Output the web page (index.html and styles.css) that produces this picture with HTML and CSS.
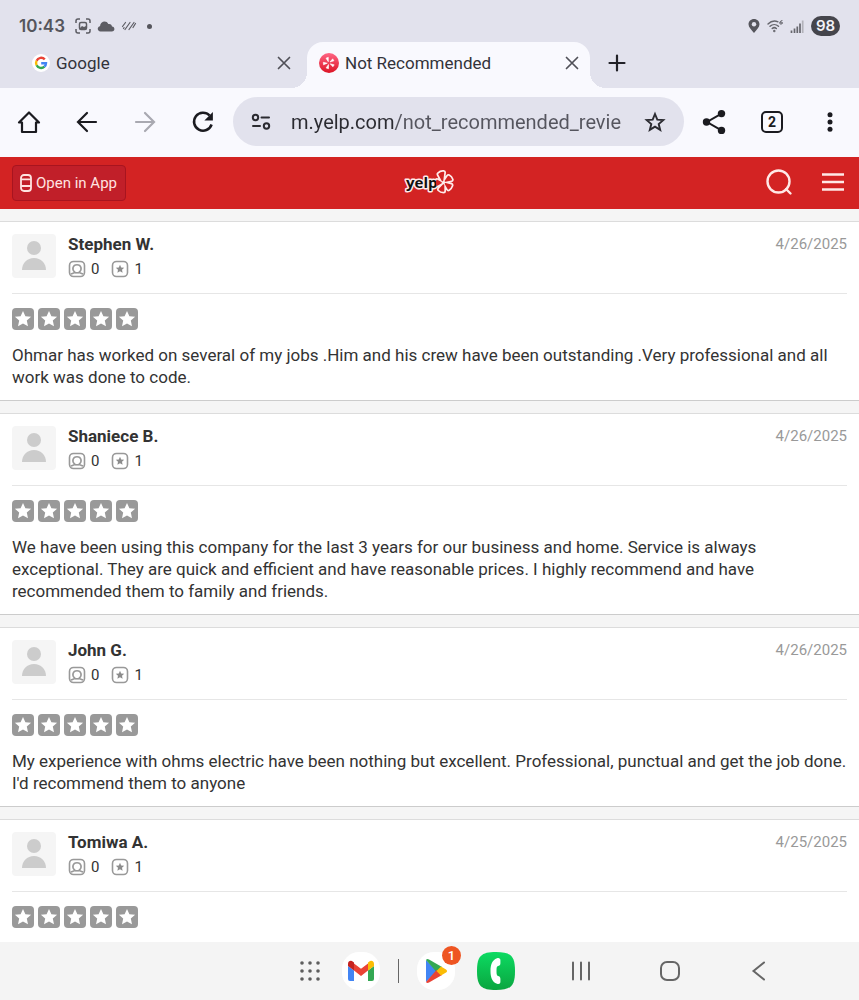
FILE: index.html
```html
<!DOCTYPE html>
<html lang="en">
<head>
    <meta charset="UTF-8">
    <meta name="viewport" content="width=device-width, initial-scale=1.0">
    <title>Not Recommended Reviews</title>
    <link rel="stylesheet" href="styles.css">
</head>
<body>
    <!-- Shared icons -->
    <svg class="sprite" aria-hidden="true">
        <symbol id="star" viewBox="0 0 22 22">
            <rect width="22" height="22" rx="4" fill="#999"/>
            <path d="M11 3l2.400 5.200 5.700.6-4.300 3.800 1.200 5.700-5-2.900-5 2.900 1.200-5.700-4.300-3.800 5.700-.6z" fill="#fff"/>
        </symbol>
        <symbol id="avatar" viewBox="0 0 44 44">
            <rect width="44" height="44" rx="4" fill="#f5f5f5"/>
            <circle cx="22" cy="14" r="7" fill="#ccc"/>
            <path d="M10 36c0-7 5-12 12-12s12 5 12 12z" fill="#ccc"/>
        </symbol>
        <symbol id="friends" viewBox="0 0 18 18">
            <g fill="none" stroke="#999" stroke-width="1.600">
                <rect x="1.500" y="1.500" width="15" height="15" rx="4"/>
                <path d="M2.800 14.200c1.500-1.200 3.400-1 4-2C3.600 9.800 4.600 4.700 9 4.700s5.400 5.100 2.200 7.500c.6 1 2.500.8 4 2"/>
                <path d="M6.500 12.800h5"/>
            </g>
        </symbol>
        <symbol id="reviews" viewBox="0 0 18 18">
            <rect x="1.500" y="1.500" width="15" height="15" rx="4" fill="none" stroke="#999" stroke-width="1.600"/>
            <path d="M9 4.800l1.200 2.700 3 .3-2.200 2 .6 2.900L9 11.200l-2.600 1.500.6-2.900-2.200-2 3-.3z" fill="#8c8c8c"/>
        </symbol>
        <symbol id="close" viewBox="0 0 14 14">
            <path d="M1.500 1.500l11 11M12.500 1.500l-11 11" stroke="#505058" stroke-width="1.700" stroke-linecap="round"/>
        </symbol>
    </svg>

    <div class="status-bar">
        <span class="clock">10:43</span>
        <svg width="16" height="16" viewBox="0 0 16 16" fill="none" stroke="#5c5c63" stroke-width="1.500">
            <path d="M1 5V3q0-2 2-2h2M11 1h2q2 0 2 2v2M15 11v2q0 2-2 2h-2M5 15H3q-2 0-2-2v-2"/>
            <rect x="4.500" y="4.500" width="7" height="7" rx="1.500"/>
            <path d="M5 10l2-2 2 1 2-1v3H5z" fill="#5c5c63" stroke="none"/>
        </svg>
        <svg width="18" height="16" viewBox="0 0 18 16" fill="#5c5c63">
            <path d="M3.500 13.500C.2 13.500-.3 8.800 3 8.200 3.200 3 9.700 1.800 11.300 6c2.200-.5 3.600.8 3.700 2.600 3.300.3 3.200 4.900-.2 4.900z"/>
        </svg>
        <svg width="16" height="16" viewBox="0 0 16 16" stroke="#5c5c63" stroke-width="1.200" stroke-linecap="round">
            <path d="M1.500 8.500l3-4M4 11.500l5-7M8 11.500l5-7M12 9.500l2.500-4M2.500 10.500l.6-.8"/>
        </svg>
        <span class="more-dot"></span>
        <div class="signals">
            <svg width="12" height="16" viewBox="0 0 12 16">
                <path d="M6 1C2.800 1 .5 3.300.5 6.300.5 9.300 3.500 12 6 15c2.500-3 5.500-5.700 5.500-8.700C11.500 3.300 9.200 1 6 1z" fill="#55555c"/>
                <circle cx="6" cy="6.200" r="2.200" fill="#e2e2ed"/>
            </svg>
            <svg width="16" height="16" viewBox="0 0 16 16" fill="none" stroke="#66666d" stroke-width="1.400" stroke-linecap="round">
                <path d="M1 6c3-3 7-3.600 10-2.200M3 8.300c2.500-2.300 6-2.300 8.500 0M5.200 10.600c1.200-1.200 3-1.200 4.200 0"/>
                <circle cx="7.300" cy="13" r=".5"/>
                <path d="M15 2.500c-1.500 0-2 1.200-2 2.300" stroke-width="1"/>
                <circle cx="14" cy="5" r="1.200" stroke-width="1"/>
            </svg>
            <svg width="14" height="16" viewBox="0 0 14 16" stroke-width="1.700" stroke="#66666d">
                <path d="M1.500 15v-2.500M4.500 15v-4.500M7.300 15V8.500M10 15V5.500"/>
                <path d="M12.700 15V2.500" stroke="#b2b2ba"/>
            </svg>
            <span class="battery">98</span>
        </div>
    </div>

    <div class="tab-strip">
        <div class="tab">
            <svg width="18" height="18" viewBox="0 0 18 18">
                <circle cx="9" cy="9" r="9" fill="#fff"/>
                <g fill="none" stroke-width="2.400">
                    <path d="M12.800 5.400A5 5 0 0 0 4.600 6.700" stroke="#ea4335"/>
                    <path d="M4.600 6.700a5 5 0 0 0 0 4.600" stroke="#fbbc05"/>
                    <path d="M4.600 11.300a5 5 0 0 0 7.800 1.400" stroke="#34a853"/>
                    <path d="M12.400 12.700A5 5 0 0 0 14 9.200H9.200" stroke="#4285f4"/>
                </g>
            </svg>
            <span class="tab-title">Google</span>
            <button class="icon-btn" aria-label="Close Google tab"><svg width="14" height="14"><use href="#close"/></svg></button>
        </div>
        <div class="tab active">
            <svg width="20" height="20" viewBox="0 0 20 20">
                <defs>
                    <linearGradient id="favicon-fill" x2="0" y2="1">
                        <stop offset="0" stop-color="#ff6685"/>
                        <stop offset="1" stop-color="#dc1425"/>
                    </linearGradient>
                </defs>
                <circle cx="10" cy="10" r="10" fill="url(#favicon-fill)"/>
                <path d="M9.300 8.700V4.300L7 5.200zM11 9l2.700-3.200 1.200 2zM11.200 10.800l4 1-1.300 2zM9.500 11.500v4.200l-2.400-.8zM8.300 10.200l-3.800 1.600-.2-2.500z" fill="#fff" stroke="#fff" stroke-width=".6" stroke-linejoin="round"/>
            </svg>
            <span class="tab-title">Not Recommended</span>
            <button class="icon-btn" aria-label="Close Not Recommended tab"><svg width="14" height="14"><use href="#close"/></svg></button>
        </div>
        <button class="icon-btn new-tab" aria-label="New tab">
            <svg width="18" height="18" viewBox="0 0 18 18"><path d="M9 1.500v15M1.500 9h15" stroke="#222228" stroke-width="2.200" stroke-linecap="round"/></svg>
        </button>
    </div>

    <div class="toolbar">
        <button class="icon-btn tool" aria-label="Home">
            <svg width="24" height="24" viewBox="0 0 24 24" fill="none" stroke="#1b1b20" stroke-width="2.200" stroke-linejoin="round" stroke-linecap="round"><path d="M2 12.500L12 2.500l10 10h-3V22H5v-9.500z"/></svg>
        </button>
        <button class="icon-btn tool" aria-label="Back">
            <svg width="24" height="24" viewBox="0 0 24 24" fill="none" stroke="#1b1b20" stroke-width="2.200" stroke-linecap="round"><path d="M21 12H3.500M12 3l-9 9 9 9"/></svg>
        </button>
        <button class="icon-btn tool" aria-label="Forward">
            <svg width="24" height="24" viewBox="0 0 24 24" fill="none" stroke="#a9a9b1" stroke-width="2.200" stroke-linecap="round"><path d="M3 12h17.500M12 3l9 9-9 9"/></svg>
        </button>
        <button class="icon-btn tool" aria-label="Reload">
            <svg width="24" height="24" viewBox="0 0 24 24" fill="none" stroke="#1b1b20" stroke-width="2.500"><path d="M20.600 14.500a9 9 0 1 1-2-9"/><path d="M21.900 2v8.500h-8.500z" fill="#1b1b20" stroke="none"/></svg>
        </button>
        <div class="address">
            <svg width="20" height="20" viewBox="0 0 20 20" fill="none" stroke="#2b2b31" stroke-width="2" stroke-linecap="round">
                <circle cx="4.500" cy="5.500" r="2.700"/><path d="M10.500 5.500H18M2 14h7"/><circle cx="15.500" cy="14" r="2.700"/>
            </svg>
            <input type="text" class="url" aria-label="Address" value="m.yelp.com/not_recommended_revie">
            <button class="icon-btn" aria-label="Bookmark">
                <svg width="22" height="22" viewBox="0 0 22 22" fill="none" stroke="#2b2b31" stroke-width="1.900"><path d="M11 3l2.300 5.600 6 .5-4.600 3.900 1.500 5.900L11 15.700l-5.200 3.200 1.500-5.900-4.600-3.900 6-.5z"/></svg>
            </button>
        </div>
        <button class="icon-btn tool" aria-label="Share">
            <svg width="24" height="26" viewBox="0 0 24 26"><path d="M19.500 4.600L5 13l14.500 8.400" fill="none" stroke="#1b1b20" stroke-width="2"/><g fill="#1b1b20"><circle cx="19.500" cy="4.600" r="3.700"/><circle cx="4.500" cy="13" r="3.700"/><circle cx="19.500" cy="21.400" r="3.700"/></g></svg>
        </button>
        <button class="icon-btn tool" aria-label="Open tabs"><span class="tab-count">2</span></button>
        <button class="icon-btn tool" aria-label="Menu">
            <svg width="6" height="20" viewBox="0 0 6 20" fill="#1b1b20"><circle cx="3" cy="2.700" r="2.500"/><circle cx="3" cy="10" r="2.500"/><circle cx="3" cy="17.300" r="2.500"/></svg>
        </button>
    </div>

    <header class="site-header">
        <a href="#" class="open-app">
            <svg width="12" height="18" viewBox="0 0 12 18" fill="none" stroke="#ffe3e1" stroke-width="1.800"><rect x="1" y="1" width="10" height="16" rx="3"/><path d="M1 5.300h10M1 12h10"/></svg>
            Open in App
        </a>
        <a href="#" class="logo" aria-label="Yelp">
            <svg width="50" height="28" viewBox="0 0 50 28">
                <defs>
                    <path id="burst" d="M38.500 11.500L35 5.200q2-2 4.500-1.700zM41.500 12l3-4.500q2 1 2.700 3.300zM41.500 14.800l5.500 1.400q-.8 2.500-2.600 3.600zM39.500 16v6q-2.500 0-4-1.600zM37 13.800L33 16q-.7-2.500 0-4.500z"/>
                </defs>
                <use href="#burst" fill="#fff" stroke="#ffeceb" stroke-width="5" stroke-linejoin="round"/>
                <text x="2" y="19" class="logo-text">yelp</text>
                <use href="#burst" fill="#d32323" stroke="#d32323" stroke-width="1.600" stroke-linejoin="round"/>
            </svg>
        </a>
        <div class="header-actions">
            <button class="icon-btn" aria-label="Search">
                <svg width="28" height="28" viewBox="0 0 28 28" fill="none" stroke="#ffe9e7" stroke-width="2.400" stroke-linecap="round"><circle cx="13.500" cy="12.500" r="11"/><path d="M21 20l4.500 4.500"/></svg>
            </button>
            <button class="icon-btn" aria-label="Menu">
                <svg width="24" height="20" viewBox="0 0 24 20" stroke="#ffe9e7" stroke-width="2.400"><path d="M1 1.500h22M1 9h22M1 16.500h22"/></svg>
            </button>
        </div>
    </header>

    <main class="reviews">
        <article class="review">
            <div class="review-head">
                <svg class="avatar"><use href="#avatar"/></svg>
                <div class="author">
                    <h2>Stephen W.</h2>
                    <div class="stats">
                        <svg><use href="#friends"/></svg><span>0</span>
                        <svg><use href="#reviews"/></svg><span>1</span>
                    </div>
                </div>
                <time datetime="2025-04-26">4/26/2025</time>
            </div>
            <div class="rating" role="img" aria-label="5 stars">
                <svg><use href="#star"/></svg><svg><use href="#star"/></svg><svg><use href="#star"/></svg><svg><use href="#star"/></svg><svg><use href="#star"/></svg>
            </div>
            <p>Ohmar has worked on several of my jobs .Him and his crew have been outstanding .Very professional and all work was done to code.</p>
        </article>

        <article class="review">
            <div class="review-head">
                <svg class="avatar"><use href="#avatar"/></svg>
                <div class="author">
                    <h2>Shaniece B.</h2>
                    <div class="stats">
                        <svg><use href="#friends"/></svg><span>0</span>
                        <svg><use href="#reviews"/></svg><span>1</span>
                    </div>
                </div>
                <time datetime="2025-04-26">4/26/2025</time>
            </div>
            <div class="rating" role="img" aria-label="5 stars">
                <svg><use href="#star"/></svg><svg><use href="#star"/></svg><svg><use href="#star"/></svg><svg><use href="#star"/></svg><svg><use href="#star"/></svg>
            </div>
            <p>We have been using this company for the last 3 years for our business and home. Service is always exceptional. They are quick and efficient and have reasonable prices. I highly recommend and have recommended them to family and friends.</p>
        </article>

        <article class="review">
            <div class="review-head">
                <svg class="avatar"><use href="#avatar"/></svg>
                <div class="author">
                    <h2>John G.</h2>
                    <div class="stats">
                        <svg><use href="#friends"/></svg><span>0</span>
                        <svg><use href="#reviews"/></svg><span>1</span>
                    </div>
                </div>
                <time datetime="2025-04-26">4/26/2025</time>
            </div>
            <div class="rating" role="img" aria-label="5 stars">
                <svg><use href="#star"/></svg><svg><use href="#star"/></svg><svg><use href="#star"/></svg><svg><use href="#star"/></svg><svg><use href="#star"/></svg>
            </div>
            <p>My experience with ohms electric have been nothing but excellent. Professional, punctual and get the job done. I'd recommend them to anyone</p>
        </article>

        <article class="review">
            <div class="review-head">
                <svg class="avatar"><use href="#avatar"/></svg>
                <div class="author">
                    <h2>Tomiwa A.</h2>
                    <div class="stats">
                        <svg><use href="#friends"/></svg><span>0</span>
                        <svg><use href="#reviews"/></svg><span>1</span>
                    </div>
                </div>
                <time datetime="2025-04-25">4/25/2025</time>
            </div>
            <div class="rating" role="img" aria-label="5 stars">
                <svg><use href="#star"/></svg><svg><use href="#star"/></svg><svg><use href="#star"/></svg><svg><use href="#star"/></svg><svg><use href="#star"/></svg>
            </div>
        </article>
    </main>

    <nav class="dock">
        <div class="apps">
            <button class="icon-btn" aria-label="All apps">
                <svg width="20" height="20" viewBox="0 0 20 20" fill="#5e5e5e">
                    <circle cx="2" cy="2" r="1.800"/><circle cx="10" cy="2" r="1.800"/><circle cx="18" cy="2" r="1.800"/>
                    <circle cx="2" cy="10" r="1.800"/><circle cx="10" cy="10" r="1.800"/><circle cx="18" cy="10" r="1.800"/>
                    <circle cx="2" cy="18" r="1.800"/><circle cx="10" cy="18" r="1.800"/><circle cx="18" cy="18" r="1.800"/>
                </svg>
            </button>
            <button class="icon-btn app" aria-label="Gmail">
                <svg width="38" height="38" viewBox="0 0 38 38">
                    <rect width="38" height="38" rx="17" fill="#fff"/>
                    <path d="M6 14l6 4.500V29H8q-2 0-2-2z" fill="#4285f4"/>
                    <path d="M32 14l-6 4.500V29h4q2 0 2-2z" fill="#34a853"/>
                    <path d="M12 11.500l7 5.300 7-5.300v7L19 24l-7-5.500z" fill="#ea4335"/>
                    <path d="M6 14v-2c0-3 3-4 5-2.300l1 .8v8z" fill="#c5221f"/>
                    <path d="M32 14v-2c0-3-3-4-5-2.300l-1 .8v8z" fill="#fbbc04"/>
                </svg>
            </button>
            <span class="divider"></span>
            <button class="icon-btn app" aria-label="Play Store, 1 notification">
                <svg width="38" height="38" viewBox="0 0 38 38">
                    <rect width="38" height="38" rx="17" fill="#fff"/>
                    <path d="M9 8v22l11-11z" fill="#4285f4"/>
                    <path d="M9 8q1-1.500 3-.5l13 7.500-5.500 5z" fill="#34a853"/>
                    <path d="M9 30q1 1.500 3 .5L25 23l-5.500-5z" fill="#ea4335"/>
                    <path d="M24 14.400l5 3q2 1.600 0 3.200l-5 3L19.500 19z" fill="#fbbc04"/>
                </svg>
                <span class="badge">1</span>
            </button>
            <button class="icon-btn app" aria-label="Phone">
                <svg width="38" height="38" viewBox="0 0 38 38">
                    <defs>
                        <linearGradient id="phone-fill" x2="0" y2="1">
                            <stop offset="0" stop-color="#0cdb62"/>
                            <stop offset="1" stop-color="#0aa53f"/>
                        </linearGradient>
                    </defs>
                    <path d="M19 0c15 0 19 4 19 19s-4 19-19 19S0 34 0 19 4 0 19 0z" fill="url(#phone-fill)"/>
                    <path d="M20 6.200c2-.8 3.400.3 3.400 2v3c0 1.800-1 2.400-2.400 2.800-1.200.4-1.500 1.600-1.500 5s.3 4.600 1.500 5c1.400.4 2.400 1 2.400 2.800v3c0 1.700-1.400 2.800-3.400 2C15 30 13.500 25 13.500 19S15 8 20 6.200z" fill="#fff"/>
                </svg>
            </button>
        </div>
        <div class="system-nav">
            <button class="icon-btn" aria-label="Recent apps"><svg width="20" height="20" viewBox="0 0 20 20" stroke="#666" stroke-width="2" stroke-linecap="round"><path d="M2 1.500v17M10 1.500v17M18 1.500v17"/></svg></button>
            <button class="icon-btn" aria-label="Home screen"><svg width="20" height="20" viewBox="0 0 20 20"><rect x="1" y="1" width="18" height="18" rx="6" fill="none" stroke="#666" stroke-width="2"/></svg></button>
            <button class="icon-btn" aria-label="Go back"><svg width="20" height="20" viewBox="0 0 20 20"><path d="M15 1.500L4.500 10 15 18.500" fill="none" stroke="#666" stroke-width="2" stroke-linecap="round"/></svg></button>
        </div>
    </nav>
</body>
</html>
```

FILE: styles.css
```css
:root {
    --chrome: #e2e2ed;
    --surface: #f9f9fe;
    --ink: #1b1b20;
    --red: #d32323;
    --text: #333;
    --muted: #999;
}

* {
    margin: 0;
    padding: 0;
    box-sizing: border-box;
}

body {
    display: flex;
    flex-direction: column;
    height: 100vh;
    background-color: #f5f5f5;
    color: var(--text);
    font-family: Roboto, sans-serif;
}

svg {
    display: block;
    flex: none;
}

.sprite {
    position: absolute;
    width: 0;
    height: 0;
}

.icon-btn {
    display: flex;
    align-items: center;
    justify-content: center;
    border: none;
    background: none;
    font-family: inherit;
    cursor: pointer;
}

/* Status bar */
.status-bar {
    display: flex;
    align-items: center;
    gap: 6px;
    height: 42px;
    padding: 10px 19px 0;
    background-color: var(--chrome);
}

.clock {
    margin-right: 4px;
    color: #55555c;
    font-family: Inter, sans-serif;
    font-size: 17px;
    font-weight: 600;
}

.more-dot {
    width: 5px;
    height: 5px;
    margin-left: 4px;
    border-radius: 50%;
    background-color: #55555c;
}

.signals {
    display: flex;
    align-items: center;
    gap: 7px;
    margin-left: auto;
}

.battery {
    width: 29px;
    border-radius: 10px;
    background-color: #45454c;
    color: #f2f2f8;
    font-family: Inter, sans-serif;
    font-size: 15px;
    font-weight: 600;
    line-height: 20px;
    text-align: center;
}

/* Tabs */
.tab-strip {
    display: flex;
    height: 46px;
    padding-left: 24px;
    background-color: var(--chrome);
}

.tab {
    position: relative;
    display: flex;
    align-items: center;
    gap: 6px;
    width: 283px;
    padding: 0 16px 4px 8px;
}

.tab.active {
    padding: 0 11px 4px 12px;
    border-radius: 16px 16px 0 0;
    background-color: var(--surface);
}

/* Flared feet of the active tab */
.tab.active::before,
.tab.active::after {
    content: "";
    position: absolute;
    bottom: 0;
    width: 16px;
    height: 16px;
}

.tab.active::before {
    left: -16px;
    background: radial-gradient(circle at 0 0, transparent 16px, var(--surface) 16px);
}

.tab.active::after {
    right: -16px;
    background: radial-gradient(circle at 100% 0, transparent 16px, var(--surface) 16px);
}

.tab-title {
    flex: 1;
    color: #33333a;
    font-size: 17px;
}

.new-tab {
    width: 54px;
    padding-bottom: 4px;
}

/* Toolbar */
.toolbar {
    display: flex;
    padding: 9px 0 11px;
    background-color: var(--surface);
}

.tool {
    width: 58px;
}

.address {
    display: flex;
    flex: 1;
    align-items: center;
    gap: 20px;
    min-width: 0;
    height: 49px;
    margin: 0 1px;
    padding: 0 18px;
    border-radius: 25px;
    background-color: var(--chrome);
}

.url {
    flex: 1;
    min-width: 0;
    border: none;
    outline: none;
    background: linear-gradient(to right, #2b2b31 104px, #55555e 104px);
    background-clip: text;
    color: transparent;
    font-family: inherit;
    font-size: 20px;
}

.tab-count {
    width: 22px;
    height: 22px;
    border: 2px solid var(--ink);
    border-radius: 5px;
    color: var(--ink);
    font-size: 14px;
    font-weight: 700;
    line-height: 18px;
}

/* Site header */
.site-header {
    display: grid;
    grid-template-columns: 1fr auto 1fr;
    align-items: center;
    height: 52px;
    padding: 0 14px 0 12px;
    background-color: var(--red);
}

.open-app {
    display: flex;
    align-items: center;
    justify-self: start;
    gap: 4px;
    height: 36px;
    padding: 0 8px 0 7px;
    border: 1px solid #a8141f;
    border-radius: 4px;
    background-color: #c11f29;
    color: #ffe3e1;
    font-size: 15px;
    text-decoration: none;
}

.logo-text {
    fill: #111;
    stroke: #ffeceb;
    stroke-width: 3px;
    stroke-linejoin: round;
    paint-order: stroke;
    font-family: "Open Sans", sans-serif;
    font-size: 15px;
    font-weight: 700;
}

.header-actions {
    display: flex;
    align-items: center;
    justify-self: end;
    gap: 28px;
}

/* Reviews */
.reviews {
    display: flex;
    flex: 1;
    flex-direction: column;
    gap: 12px;
    min-height: 0;
    padding-top: 12px;
    overflow-y: auto;
    scrollbar-width: none;
}

.review {
    flex: none;
    padding: 12px;
    border-top: 1px solid #dcdcdc;
    border-bottom: 1px solid #ccc;
    background-color: #fff;
}

.review-head {
    display: flex;
    align-items: flex-start;
    gap: 12px;
    padding-bottom: 14px;
    border-bottom: 1px solid #e6e6e6;
}

.avatar {
    width: 44px;
    height: 44px;
}

.author {
    flex: 1;
}

.author h2 {
    font-size: 17px;
    font-weight: 700;
    line-height: 20px;
}

.stats {
    display: flex;
    align-items: center;
    gap: 5px;
    margin-top: 5px;
    font-size: 15px;
    line-height: 20px;
}

.stats svg {
    width: 18px;
    height: 18px;
}

.stats span + svg {
    margin-left: 7px;
}

time {
    color: var(--muted);
    font-size: 15px;
    line-height: 20px;
}

.rating {
    display: flex;
    gap: 4px;
    margin: 14px 0;
}

.rating svg {
    width: 22px;
    height: 22px;
}

.review p {
    font-size: 17px;
    line-height: 22px;
}

/* Bottom dock */
.dock {
    display: flex;
    align-items: center;
    justify-content: flex-end;
    gap: 56px;
    height: 58px;
    padding-right: 90px;
    background-color: #f4f4f4;
}

.apps {
    display: flex;
    align-items: center;
    gap: 22px;
}

.app {
    position: relative;
}

.divider {
    width: 1px;
    height: 24px;
    margin: 0 -4px;
    background-color: #666;
}

.badge {
    position: absolute;
    top: -6px;
    right: -6px;
    width: 19px;
    border-radius: 50%;
    background-color: #ee5522;
    color: #fff;
    font-size: 13px;
    font-weight: 500;
    line-height: 19px;
}

.system-nav {
    display: flex;
    gap: 69px;
}
```
